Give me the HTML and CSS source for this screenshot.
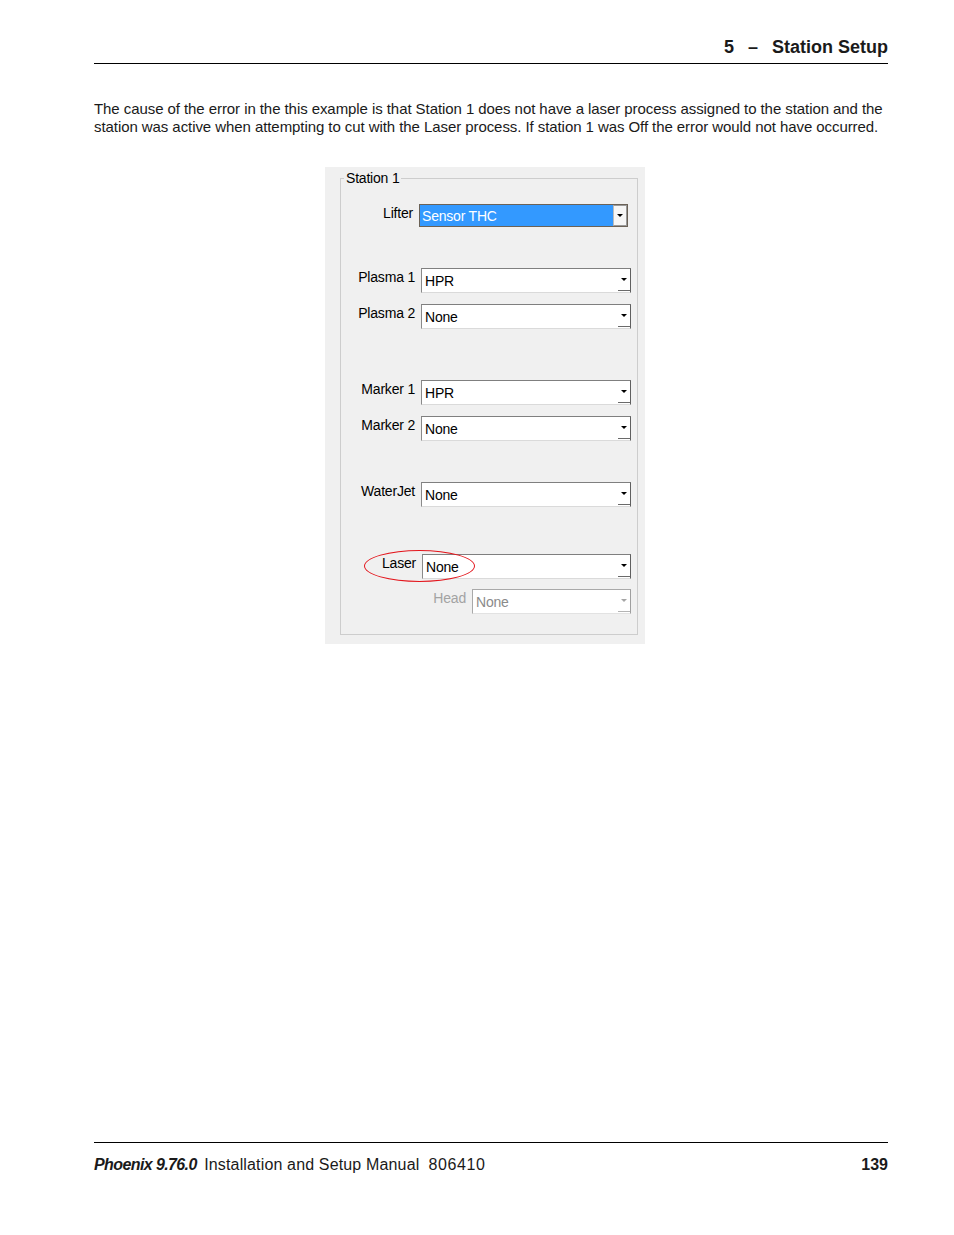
FILE: index.html
```html
<!DOCTYPE html>
<html lang="en">
<head>
    <meta charset="UTF-8">
    <meta name="viewport" content="width=device-width, initial-scale=1.0">
    <title>5 - Station Setup</title>
    <link rel="stylesheet" href="styles.css">
</head>
<body>
<div class="page">

    <header class="running-head">
        <span class="chapter"><span class="num">5</span><span class="dash">&ndash;</span>Station Setup</span>
    </header>

    <p class="body-text">The cause of the error in the this example is that Station 1 does not have a laser process assigned to the station and the station was active when attempting to cut with the Laser process. If station 1 was Off the error would not have occurred.</p>

    <div class="shot">
        <fieldset class="group">
            <legend>Station 1</legend>

            <div class="row row-lifter">
                <span class="lbl">Lifter</span>
                <div class="combo combo-sel"><span class="val">Sensor THC</span><span class="drop"></span></div>
            </div>

            <div class="row row-p1">
                <span class="lbl">Plasma 1</span>
                <div class="combo"><span class="val">HPR</span><span class="drop"></span></div>
            </div>
            <div class="row row-p2">
                <span class="lbl">Plasma 2</span>
                <div class="combo"><span class="val">None</span><span class="drop"></span></div>
            </div>

            <div class="row row-m1">
                <span class="lbl">Marker 1</span>
                <div class="combo"><span class="val">HPR</span><span class="drop"></span></div>
            </div>
            <div class="row row-m2">
                <span class="lbl">Marker 2</span>
                <div class="combo"><span class="val">None</span><span class="drop"></span></div>
            </div>

            <div class="row row-wj">
                <span class="lbl">WaterJet</span>
                <div class="combo"><span class="val">None</span><span class="drop"></span></div>
            </div>

            <div class="row row-laser">
                <span class="ring"></span>
                <span class="lbl">Laser</span>
                <div class="combo combo-laser"><span class="val">None</span><span class="drop"></span></div>
            </div>
            <div class="row row-head">
                <span class="lbl">Head</span>
                <div class="combo combo-off"><span class="val">None</span><span class="drop"></span></div>
            </div>
        </fieldset>
    </div>

    <footer class="running-foot">
        <span><b class="product">Phoenix 9.76.0</b> <span class="title">Installation and Setup Manual</span><span class="docno">806410</span></span>
        <b>139</b>
    </footer>

</div>
</body>
</html>
```

FILE: styles.css
```css
:root{
    --ink: #1a1a1a;
    --dlg-bg: #f0f0f0;
    --sel-blue: #3399ff;
}

*{
    box-sizing: border-box;
}

body{
    margin: 0;
    background: #fff;
    color: var(--ink);
    font-family: "Liberation Sans", Arial, sans-serif;
}

.page{
    min-height: 1235px;
    padding: 0 66px 0 94px;
    display: flex;
    flex-direction: column;
}

/* running header */
.running-head{
    padding-top: 36px;
    padding-bottom: 4px;
    border-bottom: 1px solid #000;
    text-align: right;
    line-height: 22px;
}
.chapter{
    font-weight: bold;
    font-size: 18px;
}
.chapter .dash{
    margin: 0 14px;
}

.body-text{
    margin: 36px 0 0;
    font-size: 15px;
    line-height: 18px;
    letter-spacing: -0.07px;
}

/* dialog screenshot */
.shot{
    width: 320px;
    margin: 31px 0 0 231px;
    padding: 3px 7px 9px 15px;
    background: var(--dlg-bg);
    font-family: "Liberation Sans", Arial, sans-serif;
    font-size: 14px;
    letter-spacing: -0.2px;
    color: #000;
}

.group{
    margin: 0;
    padding: 0 0 20px;
    border: 1px solid #cdcdcd;
    min-width: 0;
}
.group legend{
    margin-left: 3px;
    padding: 0 2px;
    line-height: 16px;
}

.row{
    display: flex;
    justify-content: flex-end;
    align-items: flex-start;
    gap: 6px;
    padding-right: 6px;
}
.row-lifter{ margin-top: 18px; }
.row-p1{ margin-top: 41px; }
.row-p2{ margin-top: 11px; }
.row-m1{ margin-top: 51px; }
.row-m2{ margin-top: 11px; }
.row-wj{ margin-top: 41px; }
.row-laser{ margin-top: 47px; position: relative; }
.row-head{ margin-top: 10px; }

.lbl{
    margin-top: 1px;
    line-height: 16px;
    white-space: nowrap;
}

.combo{
    width: 210px;
    height: 25px;
    display: flex;
    align-items: center;
    background: #fff;
    border: 1px solid;
    border-color: #7f7f7f #5f5f5f #dadada #8a8a8a;
    line-height: 16px;
}
.val{
    flex: 1;
    padding-left: 3px;
}
.drop{
    width: 12px;
    align-self: stretch;
    display: flex;
    align-items: center;
    justify-content: center;
    margin-bottom: 1px;
    border-bottom: 1px solid #6a6a6a;
}
.drop::after{
    content: "";
    border-left: 3px solid transparent;
    border-right: 3px solid transparent;
    border-top: 3px solid #000;
}

.combo-sel{
    width: 209px;
    height: 23px;
    margin-right: 3px;
    border-color: #6b6257;
    background: var(--sel-blue);
    color: #fff;
}
.combo-sel .val{
    padding-left: 2px;
}
.combo-sel .drop{
    width: 14px;
    margin: 0;
    background: #f6f6f6;
    border: 1px solid #9a9a9a;
    border-left-color: #bcbcbc;
}

.combo-laser{
    width: 209px;
}

.row-head .lbl{
    color: #a3a3a3;
}
.combo-off{
    width: 159px;
    color: #8a8a8a;
    border-color: #a9a9a9 #9f9f9f #e2e2e2 #a9a9a9;
}
.combo-off .drop{
    border-bottom-color: #b4b4b4;
}
.combo-off .drop::after{
    border-top-color: #a5a5a5;
}

/* red annotation ring round the Laser field */
.ring{
    position: absolute;
    left: 23px;
    top: -4px;
    width: 111px;
    height: 32px;
    border: 1.5px solid #e3161d;
    border-radius: 50%;
    pointer-events: none;
}

/* running footer */
.running-foot{
    margin-top: auto;
    border-top: 1px solid #000;
    padding: 12px 0 60px;
    display: flex;
    justify-content: space-between;
    font-size: 16px;
    line-height: 20px;
}
.product{
    font-style: italic;
    letter-spacing: -0.6px;
    margin-right: 3px;
}
.title{
    letter-spacing: 0.15px;
}
.docno{
    margin-left: 9px;
    letter-spacing: 0.6px;
}
```
